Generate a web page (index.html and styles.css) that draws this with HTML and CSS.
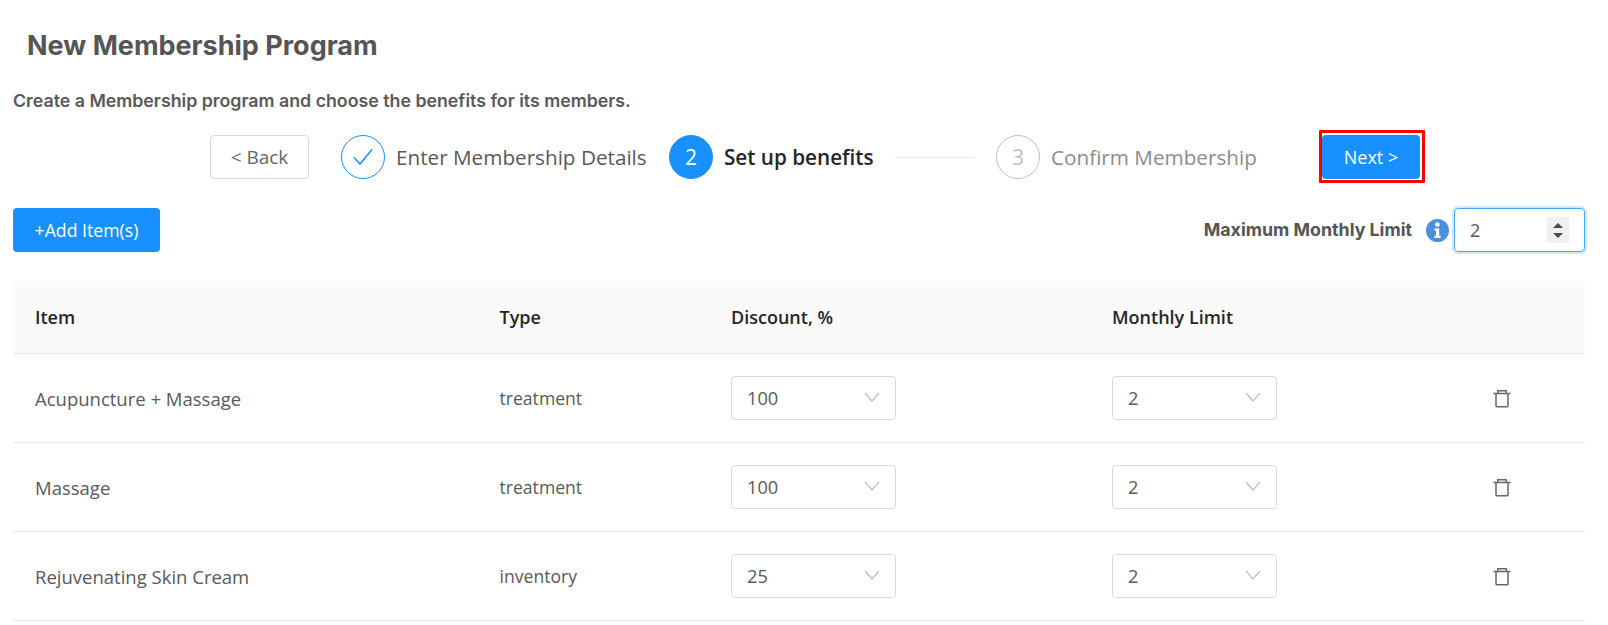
FILE: index.html
```html
<!DOCTYPE html>
<html lang="en">
<head>
<meta charset="utf-8">
<title>New Membership Program</title>
<link rel="stylesheet" href="styles.css">
</head>
<body>
<main class="page">
  <h1 class="title">New Membership Program</h1>
  <p class="subtitle">Create a Membership program and choose the benefits for its members.</p>
  <div class="wizard">
    <button class="btn btn-back">&lt; Back</button>
    <div class="step done">
      <span class="dot"><svg width="22" height="18" viewBox="0 0 22 18"><path d="M2 9.500 8 16 20 1.500" fill="none" stroke="#1890ff" stroke-width="1.500"/></svg></span>
      <span class="step-label">Enter Membership Details</span>
    </div>
    <div class="step active">
      <span class="dot">2</span>
      <span class="step-label">Set up benefits</span>
      <span class="connector"></span>
    </div>
    <div class="step todo">
      <span class="dot">3</span>
      <span class="step-label">Confirm Membership</span>
    </div>
    <button class="btn btn-next">Next &gt;</button>
  </div>
  <div class="toolbar">
    <button class="btn btn-add">+Add Item(s)</button>
    <div class="limit">
      <span class="limit-label">Maximum Monthly Limit</span>
      <svg class="info" width="23" height="23" viewBox="0 0 20 20"><circle cx="10" cy="10" r="10" fill="#4a8fe0"/><circle cx="10" cy="4.800" r="2" fill="#fff"/><path d="M7.500 8.300h4v6.200h1.200v2H7.300v-2h1.400v-4.200H7.500z" fill="#fff"/></svg>
      <div class="number">
        <span>2</span>
        <span class="spin"><i class="up"></i><i class="down"></i></span>
      </div>
    </div>
  </div>
  <div class="table">
    <div class="row head">
      <div>Item</div><div>Type</div><div>Discount, %</div><div>Monthly Limit</div><div></div>
    </div>
    <div class="row">
      <div>Acupuncture + Massage</div><div>treatment</div>
      <div><div class="select"><span>100</span><svg width="16" height="10" viewBox="0 0 16 10"><path d="M1 1l7 8 7-8" fill="none" stroke="#bfbfbf" stroke-width="1.300"/></svg></div></div>
      <div><div class="select"><span>2</span><svg width="16" height="10" viewBox="0 0 16 10"><path d="M1 1l7 8 7-8" fill="none" stroke="#bfbfbf" stroke-width="1.300"/></svg></div></div>
      <div class="trash"><svg width="18" height="19" viewBox="0 0 18 19"><path d="M.500 4.500h17M4.800 4.500V1.800h8.400v2.700M3 4.500v12.200q0 1 1 1h10q1 0 1-1V4.500" fill="none" stroke="#666" stroke-width="1.500"/></svg></div>
    </div>
    <div class="row">
      <div>Massage</div><div>treatment</div>
      <div><div class="select"><span>100</span><svg width="16" height="10" viewBox="0 0 16 10"><path d="M1 1l7 8 7-8" fill="none" stroke="#bfbfbf" stroke-width="1.300"/></svg></div></div>
      <div><div class="select"><span>2</span><svg width="16" height="10" viewBox="0 0 16 10"><path d="M1 1l7 8 7-8" fill="none" stroke="#bfbfbf" stroke-width="1.300"/></svg></div></div>
      <div class="trash"><svg width="18" height="19" viewBox="0 0 18 19"><path d="M.500 4.500h17M4.800 4.500V1.800h8.400v2.700M3 4.500v12.200q0 1 1 1h10q1 0 1-1V4.500" fill="none" stroke="#666" stroke-width="1.500"/></svg></div>
    </div>
    <div class="row">
      <div>Rejuvenating Skin Cream</div><div>inventory</div>
      <div><div class="select"><span>25</span><svg width="16" height="10" viewBox="0 0 16 10"><path d="M1 1l7 8 7-8" fill="none" stroke="#bfbfbf" stroke-width="1.300"/></svg></div></div>
      <div><div class="select"><span>2</span><svg width="16" height="10" viewBox="0 0 16 10"><path d="M1 1l7 8 7-8" fill="none" stroke="#bfbfbf" stroke-width="1.300"/></svg></div></div>
      <div class="trash"><svg width="18" height="19" viewBox="0 0 18 19"><path d="M.500 4.500h17M4.800 4.500V1.800h8.400v2.700M3 4.500v12.200q0 1 1 1h10q1 0 1-1V4.500" fill="none" stroke="#666" stroke-width="1.500"/></svg></div>
    </div>
  </div>
</main>
</body>
</html>
```
FILE: styles.css
```css
* { box-sizing: border-box; }
html, body { margin: 0; background: #fff; overflow: hidden; }
body { font-family: "Open Sans", "Noto Sans", sans-serif; color: #595959; font-size: 18px; }
.page { padding: 0 23px 0 13px; height: 625px; }
.title { margin: 0; padding: 30px 0 0 14px; font: 700 27px/32px "Inter", sans-serif; color: #555; }
.subtitle { margin: 0; padding-top: 28px; font: 600 17.770px/22px "Inter", sans-serif; color: #595959; }
.wizard { display: flex; align-items: center; height: 44px; margin-top: 23px; padding-left: 197px; }
.btn { font-family: "Open Sans", sans-serif; font-size: 18px; border-radius: 4px; height: 44px; padding: 0; cursor: pointer; }
.btn-back { width: 99px; background: #fff; border: 1px solid #d9d9d9; color: #666; margin-right: 32px; font-size: 19px; }
.step { display: flex; align-items: center; }
.dot { width: 44px; height: 44px; border-radius: 50%; display: flex; align-items: center; justify-content: center; font-size: 21px; flex: none; border: 1px solid #1890ff; }
.step-label { margin-left: 11px; font-size: 20.700px; line-height: 30px; white-space: nowrap; }
.done { width: 328px; }
.active .dot { background: #1890ff; color: #fff; }
.active .step-label { color: #262626; font-weight: 600; }
.active { width: 327px; }
.connector { width: 79px; height: 1px; background: #e8e8e8; margin-left: 21px; }
.todo .dot { border-color: #bfbfbf; color: #bfbfbf; }
.todo .step-label { color: #8c8c8c; }
.todo { width: 326px; }
.btn-next { position: relative; width: 98px; background: #1890ff; border: 0; color: #fff; }
.btn-next::after { content: ""; position: absolute; inset: -5px -5px -4px -3px; border: 3px solid #f00; border-radius: 1px; }
.toolbar { display: flex; justify-content: space-between; align-items: center; height: 44px; margin-top: 29px; }
.btn-add { width: 147px; background: #1890ff; border: 0; color: #fff; font-size: 17.700px; }
.limit { display: flex; align-items: center; }
.limit-label { font: 700 17.800px/24px "Inter", sans-serif; color: #555; }
.info { margin-left: 14px; margin-right: 5px; }
.number { width: 131px; height: 44px; border: 1px solid #40a9ff; border-radius: 4px; box-shadow: 0 0 0 2px rgba(24,144,255,.2); display: flex; align-items: center; justify-content: space-between; padding: 0 15px; font-size: 18px; }
.spin { width: 22px; height: 26px; background: #f0f0f0; display: flex; flex-direction: column; align-items: center; justify-content: center; gap: 5px; }
.spin i { width: 0; height: 0; border-left: 5px solid transparent; border-right: 5px solid transparent; }
.spin .up { border-bottom: 5px solid #4a4a4a; }
.spin .down { border-top: 5px solid #4a4a4a; }
.table { margin-top: 29px; width: 1572px; }
.row { display: grid; grid-template-columns: 464.500px 231.500px 381px 381px 1fr; align-items: center; height: 89px; border-bottom: 1px solid #e8e8e8; padding-left: 22px; font-size: 18.200px; color: #595959; }
.row > :first-child { font-size: 18.500px; }
.row > :nth-child(2) { font-size: 17.600px; }
.row.head { height: 73px; background: #fafafa; color: #262626; font-weight: 600; border-radius: 4px 4px 0 0; }
.row.head > div { font-size: 18px; }
.select { width: 165px; height: 44px; border: 1px solid #d9d9d9; border-radius: 4px; display: flex; align-items: center; justify-content: space-between; padding: 0 15px; }
.select svg { margin-top: -3px; }
.trash { display: flex; }
```
